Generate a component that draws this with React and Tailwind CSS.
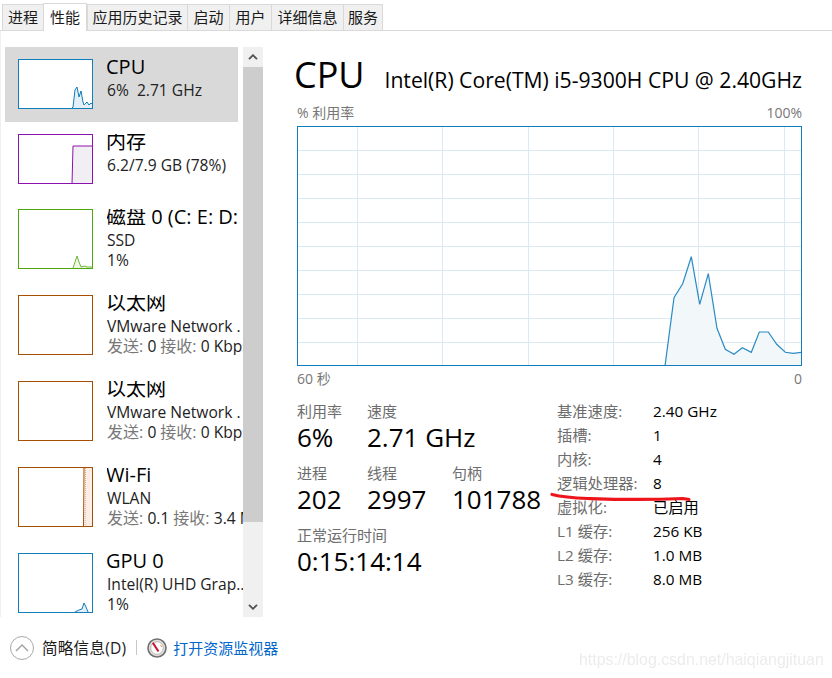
import React from 'react';

const font = { fontFamily: '"Open Sans", "Noto Sans CJK SC", sans-serif' };

const tabs = [
  { name: '进程', w: 'w-[41px]' },
  { name: '性能', w: 'w-[44px]', active: true },
  { name: '应用历史记录', w: 'w-[100px]' },
  { name: '启动', w: 'w-[42px]' },
  { name: '用户', w: 'w-[42px]' },
  { name: '详细信息', w: 'w-[72px]' },
  { name: '服务', w: 'w-[40px]' },
];

const chartLine = '367,239 376,170.7 384.7,156.7 393.3,129.7 401.7,177.3 410.3,146.7 419,201.3 427.3,222.3 436,227.3 444.3,220.7 453.3,225.3 461.3,205 470.3,205 478.7,217.3 487.3,225.3 495.3,226.3 504.3,225.3';

const Tab = ({ name, w, active }) => (
  <div
    className={`${w} flex items-center justify-center border-l border-[#d9d9d9] text-[15px] text-[#1a1a1a] ${
      active
        ? 'h-[28px] -mb-px pb-px bg-white border-t border-r border-[#d9d9d9]'
        : 'h-[26px] bg-[#f0f0f0] border-t border-[#d9d9d9] last:border-r'
    }`}
  >
    {name}
  </div>
);

const Thumb = ({ color, h, children }) => (
  <div className={`w-[75px] ${h} shrink-0 border-[1.5px] bg-white overflow-hidden`} style={{ borderColor: color }}>
    <svg width="73" height="60" className="block">
      {children}
    </svg>
  </div>
);

const Item = ({ title, lines, thumb, selected, tall }) => (
  <div className={`flex gap-[14px] pl-[17px] pt-3 ${tall ? 'pb-[14px]' : 'pb-[13px]'} relative`}>
    {selected && <div className="absolute left-[4px] right-[5px] top-0 bottom-0 bg-[#d9d9d9]" />}
    <div className="relative">{thumb}</div>
    <div className={`relative flex-1 min-w-0 overflow-hidden whitespace-nowrap ${tall ? 'h-[60px]' : 'h-[50px]'}`}>
      <div className="text-[20px] leading-[24px] text-black h-[21px] -mt-[4px] -ml-px mb-[4px]">{title}</div>
      {lines.map((l, i) => (
        <div key={i} className="text-[15.6px] leading-[20px] text-[#222]">
          {l.map((p, j) => (
            <span key={j} className={p.gray ? 'text-[#777] text-[16px]' : ''}>
              {p.t}
            </span>
          ))}
        </div>
      ))}
    </div>
  </div>
);

const Stat = ({ label, value, w }) => (
  <div className={w}>
    <div className="text-[15px] leading-[19px] text-[#6d6d6d]">{label}</div>
    <div className="text-[26px] leading-[32px] text-black">{value}</div>
  </div>
);

const specs = [
  ['基准速度:', '2.40 GHz'],
  ['插槽:', '1'],
  ['内核:', '4'],
  ['逻辑处理器:', '8'],
  ['虚拟化:', '已启用'],
  ['L1 缓存:', '256 KB'],
  ['L2 缓存:', '1.0 MB'],
  ['L3 缓存:', '8.0 MB'],
];

const net = (send, recv) => [
  { t: '发送: ', gray: true },
  { t: send + ' ' },
  { t: '接收: ', gray: true },
  { t: recv },
];

export default function App() {
  const hLines = [24, 48, 72, 96, 120, 144, 168, 192, 216];
  const vLines = [59.5, 144.5, 230.5, 315.5, 400.5, 486.5];

  return (
    <div className="w-[832px] h-[678px] bg-white relative overflow-hidden flex flex-col" style={font}>
      {/* tabs */}
      <div className="h-[31px] flex items-end pl-[2px] border-b border-[#d9d9d9] shrink-0">
        {tabs.map((t) => (
          <Tab key={t.name} {...t} />
        ))}
      </div>

      <div className="flex flex-1 min-h-0">
        {/* left list */}
        <div className="w-[263px] shrink-0 pt-4 border-l border-[#f0f0f0]">
          <div className="flex h-[570px]">
            <div className="w-[242px] overflow-hidden">
              <Item
                selected
                title="CPU"
                lines={[[{ t: '6%\u00a0\u00a02.71 GHz' }]]}
                thumb={
                  <Thumb color="#117dbb" h="h-[50px]">
                    <polygon points="53,48 54,47 56,30 58,27 60,37 62,31 64,42 65,45 68,42 70,45 72,43 74,45 74,48" fill="#e4eff7" />
                    <polyline points="53,48 54,47 56,30 58,27 60,37 62,31 64,42 65,45 68,42 70,45 72,43 74,45" fill="none" stroke="#117dbb" strokeWidth="1" />
                  </Thumb>
                }
              />
              <Item
                title="内存"
                lines={[[{ t: '6.2/7.9 GB (78%)' }]]}
                thumb={
                  <Thumb color="#8b12ae" h="h-[50px]">
                    <polygon points="53,50 54,11 75,11 75,50" fill="#f1eff4" />
                    <polyline points="53,50 54,11 75,11" fill="none" stroke="#8b12ae" strokeWidth="1" />
                  </Thumb>
                }
              />
              <Item
                tall
                title="磁盘 0 (C: E: D:"
                lines={[[{ t: 'SSD' }], [{ t: '1%' }]]}
                thumb={
                  <Thumb color="#4da60c" h="h-[60px]">
                    <polygon points="54,58 56,52 58,46 60,52 62,57 66,56 68,57 74,57 74,58" fill="#eef6e6" />
                    <polyline points="54,58 56,52 58,46 60,52 62,57 66,56 68,57 74,57" fill="none" stroke="#6fb83a" strokeWidth="1" />
                  </Thumb>
                }
              />
              <Item
                tall
                title="以太网"
                lines={[[{ t: 'VMware Network .' }], net('0', '0 Kbps')]}
                thumb={<Thumb color="#a74f01" h="h-[60px]" />}
              />
              <Item
                tall
                title="以太网"
                lines={[[{ t: 'VMware Network .' }], net('0', '0 Kbps')]}
                thumb={<Thumb color="#a74f01" h="h-[60px]" />}
              />
              <Item
                tall
                title="Wi-Fi"
                lines={[[{ t: 'WLAN' }], net('0.1', '3.4 Mbps')]}
                thumb={
                  <Thumb color="#a74f01" h="h-[60px]">
                    <polygon points="65,0 66,60 75,60 75,0" fill="#fbeee6" />
                    <polyline points="65,0 64.5,60" fill="none" stroke="#a74f01" strokeWidth="1" />
                    <polyline points="66.5,0 66,60" fill="none" stroke="#e0a080" strokeWidth="1" strokeDasharray="1 1" />
                  </Thumb>
                }
              />
              <Item
                tall
                title="GPU 0"
                lines={[[{ t: 'Intel(R) UHD Grap..' }], [{ t: '1%' }]]}
                thumb={
                  <Thumb color="#117dbb" h="h-[60px]">
                    <polygon points="56,58 60,56 63,55 65,49 67,53 69,58" fill="#e4eff7" />
                    <polyline points="56,58 60,56 63,55 65,49 67,53 69,58" fill="none" stroke="#117dbb" strokeWidth="1" />
                  </Thumb>
                }
              />
            </div>
            {/* scrollbar */}
            <div className="w-[20px] flex flex-col bg-[#f0f0f0]">
              <div className="h-[20px] flex items-center justify-center">
                <svg width="10" height="6" viewBox="0 0 10 6" fill="none" stroke="#505050" strokeWidth="1.8">
                  <path d="M1 5.2 L5 1.2 L9 5.2" />
                </svg>
              </div>
              <div className="h-[455px] bg-[#cdcdcd]" />
              <div className="flex-1" />
              <div className="h-[20px] flex items-center justify-center">
                <svg width="10" height="6" viewBox="0 0 10 6" fill="none" stroke="#505050" strokeWidth="1.8">
                  <path d="M1 0.8 L5 4.8 L9 0.8" />
                </svg>
              </div>
            </div>
          </div>
        </div>

        {/* right detail */}
        <div className="flex-1 pl-[34px] pr-[30px] min-w-0">
          <div className="flex items-baseline justify-between h-[68px] pt-[20px] -ml-[3px]">
            <span className="text-[36px] leading-[48px] text-black">CPU</span>
            <span className="text-[21.15px] text-black whitespace-nowrap">Intel(R) Core(TM) i5-9300H CPU @ 2.40GHz</span>
          </div>
          <div className="flex justify-between text-[14px] leading-[18px] text-[#777] mt-[5px] h-[20px]">
            <span>% 利用率</span>
            <span>100%</span>
          </div>
          <div className="h-[240px] border border-[#117dbb] mt-[2px]">
            <svg width="503" height="238" className="block">
              {hLines.map((y) => (
                <line key={y} x1="0" x2="503" y1={y - 0.5} y2={y - 0.5} stroke="#d9eaf4" />
              ))}
              {vLines.map((x) => (
                <line key={x} x1={x} x2={x} y1="0" y2="238" stroke="#d9eaf4" />
              ))}
              <polygon points={`${chartLine} 504,239`} fill="#f1f6fa" fillOpacity="0.9" />
              <polyline points={chartLine} fill="none" stroke="#2a8bc4" strokeWidth="1.2" />
            </svg>
          </div>
          <div className="flex justify-between text-[14px] leading-[18px] text-[#777] mt-[4px]">
            <span>60 秒</span>
            <span>0</span>
          </div>

          <div className="flex mt-[14px]">
            <div className="w-[260px]">
              <div className="flex h-[62px]">
                <Stat w="w-[70px]" label="利用率" value="6%" />
                <Stat label="速度" value="2.71 GHz" />
              </div>
              <div className="flex h-[62px]">
                <Stat w="w-[70px]" label="进程" value="202" />
                <Stat w="w-[85px]" label="线程" value="2997" />
                <Stat label="句柄" value="101788" />
              </div>
              <Stat label="正常运行时间" value="0:15:14:14" />
            </div>
            <div className="flex-1 text-[15.3px] leading-[24px] -mt-[3px]">
              {specs.map(([k, v]) => (
                <div key={k} className="flex">
                  <span className="w-[96px] text-[#6d6d6d]">{k}</span>
                  <span className="text-black">{v}</span>
                </div>
              ))}
            </div>
          </div>
        </div>
      </div>

      {/* footer */}
      <div className="h-[61px] shrink-0 flex items-start pt-[19px] pl-[10px]">
        <div className="w-[24px] h-[24px] rounded-full border border-[#a8a8a8] flex items-center justify-center">
          <svg width="14" height="8" viewBox="0 0 14 8" fill="none" stroke="#a0a0a0" strokeWidth="1.4">
            <path d="M1 7 L7 1 L13 7" />
          </svg>
        </div>
        <span className="ml-2 text-[15.6px] leading-[24px] text-[#1a1a1a] tracking-[0.2px]">简略信息(D)</span>
        <div className="w-px h-[15px] bg-[#c8c8c8] ml-[10px] mt-[4px]" />
        <svg width="20" height="20" viewBox="0 0 20 20" className="ml-[10px] mt-[2px]">
          <circle cx="10" cy="10" r="9" fill="#e4e1dc" stroke="#6f6f6f" strokeWidth="1.6" />
          <circle cx="10" cy="10" r="6.3" fill="#fff" stroke="#a8a8a8" strokeWidth="0.8" />
          <path d="M5.8 4.8 L11.5 13.5" stroke="#c8102e" strokeWidth="2" />
          <path d="M13.5 7 L14.8 9" stroke="#e89060" strokeWidth="1" />
        </svg>
        <span className="ml-[6px] text-[15px] leading-[24px] text-[#0066cc]">打开资源监视器</span>
      </div>

      {/* red pen stroke drawn over the screenshot */}
      <svg className="absolute left-[548px] top-[490px]" width="146" height="14" fill="none">
        <path d="M4 4.5 C 14 7, 26 8, 40 8.5 S 90 10.5, 135 8.5 L 141 9.5" stroke="#ee141c" strokeWidth="3.2" strokeLinecap="round" />
      </svg>

      {/* watermark */}
      <span className="absolute left-[579px] top-[650px] text-[15.9px] leading-[20px] text-[#ececec] blur-[0.4px]" style={{ fontFamily: '"Liberation Sans", sans-serif' }}>
        https://blog.csdn.net/haiqiangjituan
      </span>
    </div>
  );
}
